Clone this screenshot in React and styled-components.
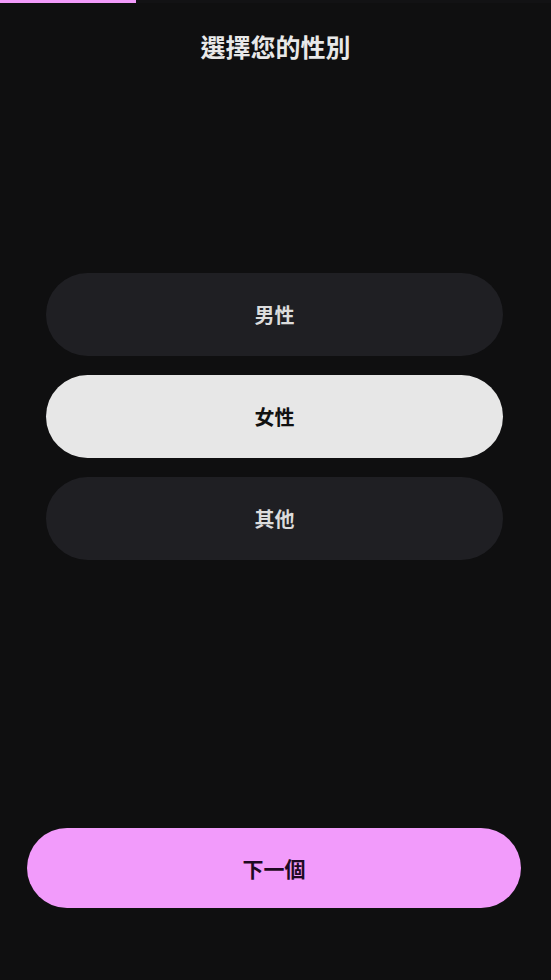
import { useState } from 'react';
import styled, { createGlobalStyle } from 'styled-components';

const GlobalStyle = createGlobalStyle`
  * {
    box-sizing: border-box;
  }
  html, body {
    margin: 0;
    padding: 0;
    background: #0f0f10;
  }
  body {
    font-family: "Noto Sans CJK TC", "Noto Sans", sans-serif;
  }
`;

const options = ['男性', '女性', '其他'];

function App() {
  const [selected, setSelected] = useState('女性');

  return (
    <>
      <GlobalStyle />
      <Page>
        <ProgressTrack>
          <ProgressFill style={{ width: '24.7%' }} />
        </ProgressTrack>
        <Title>選擇您的性別</Title>
        <OptionList>
          {options.map((label) => (
            <Option
              key={label}
              $active={selected === label}
              onClick={() => setSelected(label)}
            >
              {label}
            </Option>
          ))}
        </OptionList>
        <Footer>
          <NextButton>下一個</NextButton>
        </Footer>
      </Page>
    </>
  );
}
export default App;

const Page = styled.div`
  display: flex;
  flex-direction: column;
  min-height: 980px;
  background: #0f0f10;
`;

const ProgressTrack = styled.div`
  height: 3px;
  width: 100%;
  background: #121214;
`;

const ProgressFill = styled.div`
  height: 100%;
  background: #f29bfb;
`;

const Title = styled.h1`
  margin: 27px 0 0;
  text-align: center;
  font-size: 25px;
  line-height: 32px;
  font-weight: 700;
  color: #e8e8e8;
`;

const OptionList = styled.div`
  display: flex;
  flex-direction: column;
  gap: 19px;
  margin: 211px 48px 0 46px;
`;

const Option = styled.button`
  display: flex;
  align-items: center;
  justify-content: center;
  height: 83px;
  border: none;
  border-radius: 999px;
  background: ${(p) => (p.$active ? '#e7e7e7' : '#1f1f23')};
  color: ${(p) => (p.$active ? '#111111' : '#dcdcdc')};
  font-family: inherit;
  font-size: 20px;
  font-weight: 700;
  cursor: pointer;
`;

const Footer = styled.div`
  margin-top: auto;
  padding: 0 30px 72px 27px;
`;

const NextButton = styled.button`
  display: flex;
  align-items: center;
  justify-content: center;
  width: 100%;
  height: 80px;
  border: none;
  border-radius: 999px;
  background: #f29bfb;
  color: #1e0a22;
  font-family: inherit;
  font-size: 21px;
  font-weight: 700;
  cursor: pointer;
`;
